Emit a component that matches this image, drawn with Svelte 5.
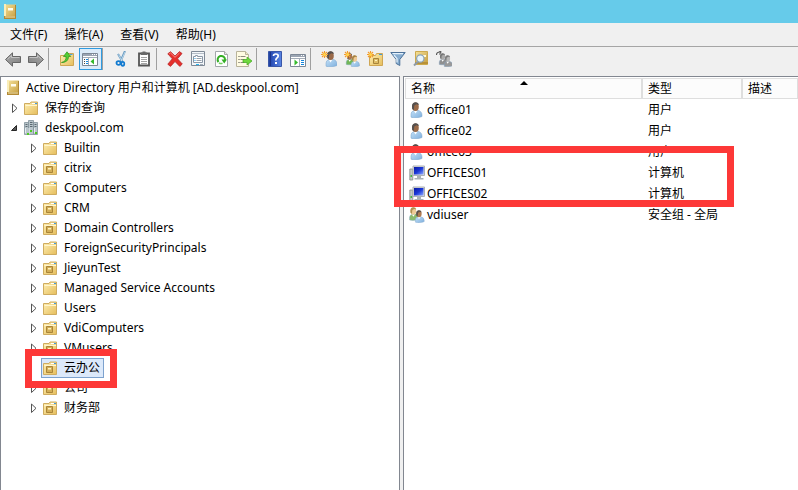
<script>
  const menus = ['文件(F)', '操作(A)', '查看(V)', '帮助(H)'];

  const toolbar = [
    [['back', '后退'], ['forward', '前进']],
    [['up', '上一级'], ['tree', '显示控制台树']],
    [['cut', '剪切'], ['paste', '粘贴']],
    [['delete', '删除'], ['props', '属性'], ['refresh', '刷新'], ['export', '导出列表']],
    [['help', '帮助'], ['actions', '显示操作窗格']],
    [['newuser', '新建用户'], ['newgroup', '新建组'], ['newou', '新建组织单位'], ['filter', '筛选'], ['find', '查找'], ['addgroup', '添加到组']]
  ];

  const units = [
    ['Builtin', 'folder'],
    ['citrix', 'ou'],
    ['Computers', 'folder'],
    ['CRM', 'ou'],
    ['Domain Controllers', 'ou'],
    ['ForeignSecurityPrincipals', 'folder'],
    ['JieyunTest', 'ou'],
    ['Managed Service Accounts', 'folder'],
    ['Users', 'folder'],
    ['VdiComputers', 'ou'],
    ['VMusers', 'ou'],
    ['云办公', 'ou'],
    ['公司', 'ou'],
    ['财务部', 'ou']
  ];

  const objects = [
    ['office01', '用户', 'user'],
    ['office02', '用户', 'user'],
    ['office03', '用户', 'user'],
    ['OFFICES01', '计算机', 'computer'],
    ['OFFICES02', '计算机', 'computer'],
    ['vdiuser', '安全组 - 全局', 'group']
  ];

  let selected = $state('云办公');
  let treeShown = $state(true);
</script>

<svg class="defs" aria-hidden="true">
  <defs>
    <linearGradient id="gold" x1="0" y1="0" x2="1" y2="1">
      <stop offset="0" stop-color="#fff0b4" /><stop offset="1" stop-color="#e5bd5c" />
    </linearGradient>
    <linearGradient id="book" x1="0" y1="0" x2="1" y2="1">
      <stop offset="0" stop-color="#f6e29a" /><stop offset="1" stop-color="#c49c3e" />
    </linearGradient>
    <linearGradient id="steel" x1="0" y1="0" x2="1" y2="1">
      <stop offset="0" stop-color="#a8a8a8" /><stop offset="1" stop-color="#828282" />
    </linearGradient>
    <linearGradient id="blue" x1="0" y1="0" x2="1" y2="1">
      <stop offset="0" stop-color="#c4e0f6" /><stop offset="1" stop-color="#7fb0de" />
    </linearGradient>
    <linearGradient id="screen" x1="0" y1="0" x2="1" y2="1">
      <stop offset="0" stop-color="#0c1ba0" /><stop offset=".5" stop-color="#1a37d8" /><stop offset="1" stop-color="#8fabff" />
    </linearGradient>
    <linearGradient id="helpblue" x1="0" y1="0" x2="1" y2="0">
      <stop offset="0" stop-color="#1f3f9c" /><stop offset=".25" stop-color="#2b50b8" /><stop offset="1" stop-color="#5b86e4" />
    </linearGradient>
  </defs>
</svg>

{#snippet star()}
  <path d="M3.500 0v7M0 3.500h7M1 1l5 5M6 1 1 6" stroke="#f39a2c" stroke-width="1.100" />
  <circle cx="3.500" cy="3.500" r="1.600" fill="#ffd34a" />
{/snippet}

{#snippet folderShape()}
  <path d="M1.500 3.500h5.500l1-1.500h6.500v12.500h-13z" fill="url(#gold)" stroke="#cfac60" />
  <path d="M9 3h5v1H9z" fill="#fff" /><path d="M12 3h2v1h-2z" fill="#3b9be0" />
  <path d="M2.500 5.500h11.500" stroke="#fff6cf" />
{/snippet}

{#snippet person(skin, hair, body)}
  <path d="M3 15.200V12q0-2.500 3-3.500l3-.5q5 1 5 5v1.500q-2 1-5 1.200-4 .3-6-.5z" fill={body} stroke="#7ba5cd" stroke-width=".5" />
  <path d="M6 9l1.500 2.500L9.500 8.500z" fill="#fff" />
  <ellipse cx="7.500" cy="4.800" rx="3.300" ry="4.300" fill={skin} />
  <path d="M4.200 7Q3 1 7 .300 10.500 0 10.800 3L8.500 2.300 6.300 3.500 5.800 8z" fill={hair} />
{/snippet}

{#snippet icon(name)}
  <svg class="icon" width="16" height="16" viewBox="0 0 16 16" fill="none" aria-hidden="true">
    {#if name === 'book'}
      <path d="M3 .5h12v14H3z" fill="url(#book)" /><path d="M3 12h12v3H3z" fill="#b48b35" />
      <path d="M3 0h2v12H3z" fill="#faeeb9" /><path d="M14 1h1v13h-1z" fill="#ad8634" />
      <path d="M7 4h5v2.500H7z" fill="#fffdf0" /><path d="M4 13h10" stroke="#f5e8b4" />
    {:else if name === 'back' || name === 'forward'}
      <g transform={name === 'forward' ? 'matrix(-1 0 0 1 16 0)' : undefined}>
        <path d="M.5 8.500 7.500 1.800v3.700h8v6h-8v3.700z" fill="url(#steel)" stroke="#666" />
        <path d="M2.500 8.200 6.500 4.500v2h8" stroke="#cdcdcd" stroke-width=".8" />
      </g>
    {:else if name === 'up'}
      <path d="M1.500 4.500h6l1-2h6v12h-13z" fill="url(#gold)" stroke="#cfa654" />
      <path d="M11 3.500h2.500" stroke="#4aa3e0" />
      <path d="M2.500 11.500q5-1 4.500-6H4.500L8 .8l3.700 4.700H9.500q0 6-7 6z" fill="#55ce35" stroke="#289218" stroke-width=".7" />
    {:else if name === 'tree'}
      <path d="M.5 2.500h15v12H.5z" fill="#fff" stroke="#7d8896" />
      <path d="M1 3h14v2H1z" fill="#9ba5b3" /><path d="M10 3.500h1m1 0h1m1 0h1" stroke="#fff" />
      <path d="M1 6.500h14M6.500 6v8" stroke="#a3acb8" />
      <path d="M2 8.500h1m-1 2h1m-1 2h1" stroke="#444" /><path d="M4 8.500h2m-2 2h2m-2 2h2" stroke="#1686db" />
      <path d="M12 7.500v6L8.500 10.500z" fill="#35b92c" />
    {:else if name === 'cut'}
      <path d="M12 0 7.500 10.500M5 3l4.500 7.500" stroke="#6a9cc2" stroke-width="2" />
      <path d="M12 1 8 10M5.500 3.500 9 10" stroke="#d9ebf7" stroke-width=".7" />
      <ellipse cx="5.500" cy="12" rx="2" ry="1.800" stroke="#137bd0" stroke-width="1.800" /><ellipse cx="9.800" cy="12.800" rx="1.500" ry="2" stroke="#137bd0" stroke-width="1.700" />
    {:else if name === 'paste'}
      <path d="M3 2.500h10v12H3z" fill="#fff" stroke="#555" stroke-width="1.800" />
      <path d="M5 1.500h1.500V.500h3v1H11V4H5z" fill="#686868" />
      <path d="M5 6.500h6m-6 2h6m-6 2h6m-6 2h6" stroke="#a4a4a4" />
    {:else if name === 'delete'}
      <path d="M.8 2.800 3.500.7 8 5 12.500.6 15 2.500 10.500 7.800 15.300 13 12.800 15.400 8 10.500 3.500 15.400.8 13.200 5.300 7.800z" fill="#e62f2b" stroke="#b8282a" stroke-width=".8" />
      <path d="M2.200 2.900 3.500 2 8 6.300 12.500 2" stroke="#fa8580" />
    {:else if name === 'props'}
      <path d="M1.500.500h13v14h-13z" fill="#f4f7fa" stroke="#7f8996" />
      <path d="M2 2.500h12" stroke="#b6bec8" />
      <path d="M3.500 5.500h2v-1h2v1h5v6h-9z" fill="#fff" stroke="#8a97a6" />
      <path d="M4.500 7.500h1m-1 2h1" stroke="#1e9be0" /><path d="M6.500 7.500h5m-5 2h5" stroke="#98a2ad" />
      <path d="M6 13.500h3" stroke="#28b7f0" /><path d="M10 13.500h3" stroke="#a5afba" />
    {:else if name === 'refresh'}
      <path d="M2.500.500h9l3 3v12h-12z" fill="#fff" stroke="#a3a7ab" /><path d="M11.500.500v3h3" fill="#e5e5e5" stroke="#a5a5a5" />
      <path d="M5.500 11A3.700 3.700 0 1 1 12 9" stroke="#34ae25" stroke-width="2" />
      <path d="M8.500 8.500H14L11.200 12.500z" fill="#34ae25" /><path d="M6 11.800q1.500 1.200 3.500.500" stroke="#71d45e" stroke-width="1.500" />
    {:else if name === 'export'}
      <path d="M.5.500h9l3 3v12H.5z" fill="#fffbe2" stroke="#b9b39a" /><path d="M9.500.500v3h3" fill="#eee8c5" stroke="#b9b39a" />
      <path d="M2.500 5.500h1m-1 3h1m-1 3h1" stroke="#444" /><path d="M4.500 5.500h5m-5 3h4m-4 3h4" stroke="#8c8a7c" />
      <path d="M7 8.500h4V6l5 4-5 4v-2.500H7z" fill="#70d83d" stroke="#41a821" stroke-width=".700" />
    {:else if name === 'help'}
      <path d="M1.500.500h13v15h-13z" fill="url(#helpblue)" stroke="#3a57a8" /><path d="M3.500 1v14" stroke="#1b338a" />
      <path d="M6.500 5q0-2 2.300-2 2.400 0 2.400 2 0 1.300-1.500 2.200-.9.600-.9 2.300" stroke="#fff" stroke-width="1.700" /><path d="M8 11h2v2H8z" fill="#fff" />
    {:else if name === 'actions'}
      <path d="M.5 3.500h15v12H.5z" fill="#fff" stroke="#7d8896" />
      <path d="M1 4h14v2H1z" fill="#9ba5b3" /><path d="M11 4.500h1m1 0h1" stroke="#fff" />
      <path d="M1 7.500h14M9.500 7v8" stroke="#a3acb8" /><path d="M4.500 8.500v6l3.500-3z" fill="#35b92c" />
      <path d="M11 9.500h3m-3 2h3m-3 2h3" stroke="#1686db" />
    {:else if name === 'user'}
      <g transform="translate(-1)">{@render person('#9a6a49', '#55504e', 'url(#blue)')}</g>
    {:else if name === 'newuser'}
      <g transform="translate(2)">{@render person('#9a6a49', '#55504e', 'url(#blue)')}</g>{@render star()}
    {:else if name === 'group'}
      <g transform="translate(-2) scale(.85)">{@render person('#efcb96', '#b09050', '#8bbb6d')}</g>
      <g transform="translate(4 3) scale(.8)">{@render person('#b07a50', '#5b514b', 'url(#blue)')}</g>
    {:else if name === 'newgroup'}
      <g transform="translate(0 2) scale(.75)">{@render person('#a87450', '#5b514b', '#72b657')}</g>
      <g transform="translate(5 4) scale(.75)">{@render person('#efcb96', '#a58244', 'url(#blue)')}</g>{@render star()}
    {:else if name === 'newou'}
      <path d="M2.500 4.500h6l1-2h6v12h-13z" fill="url(#gold)" stroke="#cfa654" /><path d="M12 3.500h3" stroke="#3b9be0" />
      <path d="M6.500 7.500h5v5h-5z" fill="#dfbd67" stroke="#a8843b" /><path d="M8 9h2v1H8z" fill="#fff3bf" />{@render star()}
    {:else if name === 'filter'}
      <path d="M.8 1.500h14.400L9.800 8.500v6L6.200 12.500v-4z" fill="#86acd0" stroke="#4d7299" />
      <path d="M2.500 2.700h10.500M4 4.200l3 3.500V11.500" stroke="#e4f1fb" stroke-width="1.300" />
    {:else if name === 'find'}
      <path d="M2.500.500h12v13h-12z" fill="url(#book)" stroke="#cdaa4e" /><path d="M2 12h13" stroke="#b99136" stroke-width="2" />
      <path d="M10 4h3v2h-3z" fill="#fff9d8" /><path d="M5 10.500 1 14.500" stroke="#8d9aa6" stroke-width="2" />
      <circle cx="7.300" cy="7.500" r="3.700" fill="#e7f4fc" stroke="#8ba2b5" stroke-width="1.200" />
    {:else if name === 'addgroup'}
      <g transform="translate(1 2) scale(.75)">{@render person('#aaa', '#777', '#909090')}</g>
      <g transform="translate(6 4) scale(.75)">{@render person('#b8b8b8', '#7d7d7d', '#999')}</g>
      <path d="M.5 4q0-3 3.500-3M3-.5l2 1.500L3.500 3.500" stroke="#555" stroke-width="1.100" />
    {:else if name === 'folder'}
      {@render folderShape()}
    {:else if name === 'ou'}
      {@render folderShape()}
      <path d="M4.500 6.500h6v6h-6z" fill="#d3ae57" stroke="#aa8538" /><path d="M6 8h3v1.500H6z" fill="#fff2b8" />
    {:else if name === 'domain'}
      <g fill="#b9c5cb" stroke="#82929b" stroke-width=".8">
        <path d="M5.500.500h5v14h-5z" /><path d="M1.500 2.500h4v12h-4zM10.500 2.500h4v12h-4z" />
      </g>
      <path d="M7 2.500h2.500M7 4.500h2.500M2.500 4.500h2m-2 2h2M11.500 4.500h2m-2 2h2M7 6.500h2.500" stroke="#5c6a72" />
      <path d="M6 8v6M2.500 8v5M11.500 8v5" stroke="#e4ebee" />
      <path d="M7 10h2v2H7zM4 13h2v2H4zM12 12h2v2h-2z" fill="#4dcd20" />
    {:else if name === 'computer'}
      <path d="M.8 4h3v11h-3z" fill="#c2c8c6" stroke="#848d8b" stroke-width=".800" /><path d="M1.500 10h1.500v2H1.500z" fill="#46b941" />
      <path d="M4 1h11.500v9.500H4z" fill="#dadada" stroke="#adb2b6" /><path d="M5 2h9.500v7.500H5z" fill="url(#screen)" />
      <path d="M8 11h4v2h2.500v1.500h-9V13H8z" fill="#a9b2b7" />
    {/if}
  </svg>
{/snippet}

{#snippet twisty(open)}
  <svg width="18" height="20" viewBox="0 0 18 20" aria-hidden="true">
    {#if open}
      <path d="M12.500 7.500v5h-5z" fill="#595959" stroke="#262626" />
    {:else}
      <path d="M8.500 6v8.500l4.500-4.200z" fill="#fff" stroke="#555" />
    {/if}
  </svg>
{/snippet}

<div class="window">
  <header class="title">{@render icon('book')}</header>

  <nav class="menu" aria-label="菜单">
    {#each menus as m}<button type="button">{m}</button>{/each}
  </nav>

  <div class="toolbar" role="toolbar" aria-label="工具栏">
    {#each toolbar as group}
      <div class="group">
        {#each group as [name, label]}
          {#if name === 'tree'}
            <button type="button" aria-label={label} title={label} class:pressed={treeShown} aria-pressed={treeShown} onclick={() => (treeShown = !treeShown)}>{@render icon(name)}</button>
          {:else}
            <button type="button" aria-label={label} title={label}>{@render icon(name)}</button>
          {/if}
        {/each}
      </div>
    {/each}
  </div>

  <main>
    {#if treeShown}
      <section class="pane tree" aria-label="控制台树">
        <ul>
          <li>
            <div class="row"><button type="button" class="node">{@render icon('book')}Active Directory 用户和计算机 [AD.deskpool.com]</button></div>
            <ul class="first">
              <li>
                <div class="row">
                  <button type="button" class="twisty" aria-label="展开" aria-expanded="false">{@render twisty(false)}</button>
                  <button type="button" class="node">{@render icon('folder')}保存的查询</button>
                </div>
              </li>
              <li>
                <div class="row">
                  <button type="button" class="twisty" aria-label="折叠" aria-expanded="true">{@render twisty(true)}</button>
                  <button type="button" class="node">{@render icon('domain')}deskpool.com</button>
                </div>
                <ul class="second">
                  {#each units as [name, kind]}
                    <li>
                      <div class="row">
                        {#if name === '云办公'}
                          <span class="twisty"></span>
                        {:else}
                          <button type="button" class="twisty" aria-label="展开" aria-expanded="false">{@render twisty(false)}</button>
                        {/if}
                        <button type="button" class="node" class:selected={selected === name} onclick={() => (selected = name)}>{@render icon(kind)}{name}</button>
                        {#if name === '云办公'}<span class="mark unit-mark"></span>{/if}
                      </div>
                    </li>
                  {/each}
                </ul>
              </li>
            </ul>
          </li>
        </ul>
      </section>
    {/if}

    <section class="pane list" aria-label="对象">
      <table>
        <thead>
          <tr>
            <th class="name" aria-sort="ascending">名称<span class="sort"></span></th>
            <th class="type">类型</th>
            <th>描述</th>
          </tr>
        </thead>
        <tbody>
          {#each objects as [name, type, kind]}
            <tr>
              <td><span class="object">{@render icon(kind)}{name}</span></td>
              <td>{type}</td>
              <td></td>
            </tr>
          {/each}
        </tbody>
      </table>
      <span class="mark list-mark"></span>
    </section>
  </main>
</div>

<style>
  .defs { position: absolute; width: 0; height: 0; }
  .window {
    display: flex;
    flex-direction: column;
    min-height: 100vh;
    background: #f0f0f0;
    color: #000;
    font: 12px/20px "Noto Sans", "Noto Sans CJK SC", sans-serif;
  }
  button {
    margin: 0;
    padding: 0;
    border: 0;
    background: none;
    color: inherit;
    font: inherit;
    white-space: nowrap;
  }
  .icon { display: block; flex: none; }

  .title { display: flex; align-items: center; height: 23px; padding-left: 1px; background: #66cbea; }
  .menu {
    display: flex;
    align-items: center;
    gap: 17px;
    height: 23px;
    padding: 0 10px;
    border-bottom: 1px solid #a5a5a5;
  }
  .toolbar { display: flex; padding: 1px 2px 6px; }
  .group { display: flex; }
  .group + .group { padding-left: 7px; border-left: 1px solid #a0a0a0; }
  .group button { width: 23px; height: 22px; padding: 0 3px; }
  .group .pressed { padding: 0 2px; border: 1px solid #2f9be0; background: #dcebf8; }

  main { display: flex; flex: 1; gap: 3px; }
  .pane { border: 1px solid #828790; border-bottom: 0; background: #fff; }
  .tree { flex: none; box-sizing: border-box; width: 400px; padding: 1px 2px; }
  .list { position: relative; flex: 1; min-width: 0; padding: 1px 0 0 1px; border-right: 0; }

  ul { margin: 0; padding: 0; list-style: none; }
  .first { padding-left: 1px; }
  .second { padding-left: 19px; }
  .row { position: relative; display: flex; height: 20px; }
  .twisty { width: 18px; height: 20px; }
  .twisty svg { display: block; }
  .node {
    display: flex;
    align-items: center;
    gap: 6px;
    padding-right: 3px;
    border: 1px solid transparent;
    line-height: 18px;
  }
  .node.selected { border-color: #7da2ce; background: #dce9fa; }

  table { width: 100%; table-layout: fixed; border-collapse: separate; border-spacing: 0; }
  th, td { box-sizing: border-box; height: 21px; padding: 0 5px; text-align: left; font-weight: 400; white-space: nowrap; }
  th { position: relative; border: solid #dedede; border-width: 1px 1px 1px 1px; background: #fcfcfc; line-height: 18px; }
  td { padding: 0 6px; }
  .name { width: 237px; }
  .type { width: 100px; }
  td:first-child { padding-left: 4px; }
  .object { display: flex; align-items: center; gap: 2px; }
  .sort {
    position: absolute;
    top: 2px;
    left: 50%;
    margin-left: -4px;
    border: 4px solid transparent;
    border-top: 0;
    border-bottom-color: #000;
  }

  .mark { position: absolute; box-sizing: border-box; border: 7px solid #fd3837; pointer-events: none; z-index: 1; }
  .unit-mark { top: -9px; left: 2px; width: 92px; height: 39px; }
  .list-mark { top: 69px; left: -10px; width: 340px; height: 61px; }
</style>
